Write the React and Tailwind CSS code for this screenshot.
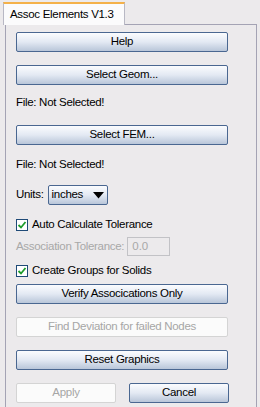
const Btn = ({ label, className = "", disabled = false }) => (
    <button
        disabled={disabled}
        className={
            disabled
                ? `h-[20px] rounded-[2px] border border-[#d4d4d4] bg-[#fbfbfb] text-[11.5px] leading-none tracking-[-0.3px] text-[#a6a6a6] ${className}`
                : `h-[20px] rounded-[2px] border border-[#4a6791] bg-gradient-to-b from-[#fbfcfe] via-[#e3e9f3] to-[#b9c6d9] text-[11.5px] leading-none tracking-[-0.3px] text-black ${className}`
        }
    >
        {label}
    </button>
);

const Check = ({ label, className = "" }) => (
    <div className={`flex h-[16px] items-center gap-[4px] ${className}`}>
        <div className="flex h-[12px] w-[12px] items-center justify-center border border-[#1f4a77] bg-white">
            <svg width="10" height="10" viewBox="0 0 10 10">
                <path
                    d="M1.5 5 L4 7.5 L8.5 2"
                    fill="none"
                    stroke="#1d9c2b"
                    strokeWidth="1.8"
                />
            </svg>
        </div>
        <span className="text-[11.5px] tracking-[-0.3px] text-black">{label}</span>
    </div>
);

export default function App() {
    return (
        <div
            className="h-[407px] w-[260px] overflow-hidden bg-[#eceaec]"
            style={{ fontFamily: '"Liberation Sans", Arial, sans-serif' }}
        >
            {/* Tab */}

            <div className="relative z-10 -mb-px flex h-[25px] items-end pl-[3px]">
                <div className="flex h-[23px] w-[122px] items-center whitespace-nowrap border-x border-t-2 border-x-[#b8b8c4] border-t-[#f4b149] bg-[#fbfbfc] pl-[6px] text-[11.5px] tracking-[-0.3px] text-black">
                    Assoc Elements V1.3
                </div>
            </div>

            {/* Panel */}

            <div className="ml-[5px] flex h-[400px] w-[252px] flex-col border border-[#a4a3b4] pl-[10px] pt-[7px]">
                <Btn label="Help" className="w-[212px]" />
                <Btn label="Select Geom..." className="mt-[13px] w-[212px]" />

                <div className="mt-[10px] flex h-[16px] items-center text-[11.5px] tracking-[-0.3px] text-black">
                    File: Not Selected!
                </div>

                <Btn label="Select FEM..." className="mt-[14px] w-[212px]" />

                <div className="mt-[12px] flex h-[16px] items-center text-[11.5px] tracking-[-0.3px] text-black">
                    File: Not Selected!
                </div>

                <div className="mt-[12px] flex h-[20px] items-center">
                    <span className="text-[11.5px] tracking-[-0.3px] text-black">Units:</span>
                    <div className="ml-[4px] flex h-[20px] w-[60px] items-center justify-between rounded-[2px] border border-[#4a6791] bg-gradient-to-b from-[#fbfcfe] via-[#e3e9f3] to-[#b9c6d9] px-[3px]">
                        <span className="text-[11.5px] tracking-[-0.3px] text-black">inches</span>
                        <svg width="11" height="7" viewBox="0 0 11 7">
                            <path d="M0 0 H11 L5.5 6.5 Z" fill="#000" />
                        </svg>
                    </div>
                </div>

                <Check label="Auto Calculate Tolerance" className="mt-[12px]" />

                <div className="mt-[4px] flex h-[19px] items-center">
                    <span className="text-[11.5px] tracking-[-0.3px] text-[#a8a8a8]">
                        Association Tolerance:
                    </span>
                    <div className="ml-[3px] flex h-[19px] w-[43px] items-center border border-[#c2c2c6] pl-[4px] text-[11.5px] text-[#a8a8a8]">
                        0.0
                    </div>
                </div>

                <Check label="Create Groups for Solids" className="mt-[7px]" />

                <Btn label="Verify Assocications Only" className="mt-[5px] w-[212px]" />
                <Btn
                    label="Find Deviation for failed Nodes"
                    className="mt-[13px] w-[212px]"
                    disabled
                />
                <Btn label="Reset Graphics" className="mt-[13px] w-[212px]" />

                <div className="mt-[13px] flex gap-[13px]">
                    <Btn label="Apply" className="w-[100px]" disabled />
                    <Btn label="Cancel" className="w-[100px]" />
                </div>
            </div>
        </div>
    );
}
